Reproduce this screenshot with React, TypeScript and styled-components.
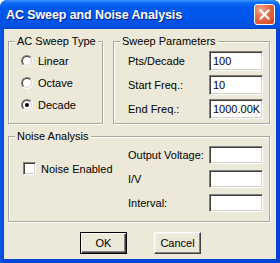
import React from 'react';
import styled, { createGlobalStyle } from 'styled-components';

const Global = createGlobalStyle`
  html, body { margin: 0; padding: 0; background: #ffffff; }
  body { font-family: "Liberation Sans", Arial, sans-serif; }
  #root { width: 280px; height: 263px; }
`;

const Window = styled.div`
  width: 280px;
  height: 263px;
  box-sizing: border-box;
  display: flex;
  flex-direction: column;
  background: linear-gradient(to right, #0A5BE5 0px, #0646D6 4px, #0646D6 276px, #0A3FC8 280px);
  border-radius: 7px 7px 0 0;
  overflow: hidden;
`;

const TitleBar = styled.div`
  height: 29px;
  flex: 0 0 29px;
  box-sizing: border-box;
  display: flex;
  align-items: center;
  justify-content: space-between;
  padding: 0 5px 0 6px;
  background: linear-gradient(
    to bottom,
    #3D95FF 0px,
    #0A6AF4 3px,
    #0058EE 8px,
    #0055E8 20px,
    #0050E0 26px,
    #0046D0 29px
  );
`;

const Title = styled.span`
  color: #ffffff;
  font-family: "Liberation Sans", Arial, sans-serif;
  font-weight: bold;
  font-size: 12.5px;
  letter-spacing: -0.1px;
  text-shadow: 1px 1px 0 #0A1E80;
  padding-top: 1px;
`;

const CloseButton = styled.div`
  width: 21px;
  height: 21px;
  box-sizing: border-box;
  border: 1px solid #ffffff;
  border-radius: 3px;
  background: radial-gradient(circle at 30% 25%, #F0A88A 0%, #E56A43 45%, #D2451C 100%);
  display: flex;
  align-items: center;
  justify-content: center;
`;

const Client = styled.div`
  flex: 1;
  margin: 0 4px 4px 4px;
  background: #ECE9D8;
  box-sizing: border-box;
  padding: 6px 0 0 4px;
  display: flex;
  flex-direction: column;
`;

const TopRow = styled.div`
  display: flex;
  gap: 10px;
`;

const Group = styled.fieldset<{ $w: number; $h: number; $mt?: number }>`
  margin: ${p => p.$mt ?? 0}px 0 0 0;
  padding: 0;
  min-width: 0;
  width: ${p => p.$w}px;
  height: ${p => p.$h}px;
  box-sizing: border-box;
  border: 1px solid #ACA899;
  box-shadow: inset 1px 1px 0 #ffffff, 1px 1px 0 #ffffff;
`;

const Caption = styled.legend`
  margin-left: 6px;
  padding: 0 2px;
  font-size: 11px;
  line-height: 13px;
  color: #000000;
  background: #ECE9D8;
`;

const RadioList = styled.div`
  display: flex;
  flex-direction: column;
  gap: 6px;
  padding: 5px 0 0 12px;
`;

const OptionRow = styled.label`
  display: flex;
  align-items: center;
  gap: 5px;
  height: 16px;
  font-size: 11px;
  color: #000000;
`;

const RadioOuter = styled.span`
  width: 12px;
  height: 12px;
  box-sizing: border-box;
  border-radius: 50%;
  border: 1px solid;
  border-color: #808080 #ffffff #ffffff #808080;
  display: flex;
`;

const RadioInner = styled.span<{ $on: boolean }>`
  flex: 1;
  border-radius: 50%;
  border: 1px solid;
  border-color: #404040 #D4D0C8 #D4D0C8 #404040;
  background: #ffffff;
  display: flex;
  align-items: center;
  justify-content: center;
  &::after {
    content: "";
    width: 4px;
    height: 4px;
    border-radius: 50%;
    background: ${p => (p.$on ? '#000000' : 'transparent')};
  }
`;

const FieldGrid = styled.div<{ $rowH: number }>`
  display: grid;
  grid-template-columns: 81px 54px;
  grid-auto-rows: ${p => p.$rowH}px;
  row-gap: ${p => 24 - p.$rowH}px;
  align-items: center;
  padding-top: 3px;
`;

const FieldLabel = styled.span`
  font-size: 11px;
  color: #000000;
  white-space: nowrap;
`;

const TextBox = styled.div`
  height: 100%;
  box-sizing: border-box;
  border: 1px solid;
  border-color: #808080 #ffffff #ffffff #808080;
  box-shadow: inset 1px 1px 0 #404040, inset -1px -1px 0 #D4D0C8;
  background: #ffffff;
  font-size: 11px;
  color: #000000;
  padding: 2px 0 0 3px;
  line-height: 14px;
  white-space: nowrap;
  overflow: hidden;
`;

const GroupBody = styled.div`
  display: flex;
  padding-left: 14px;
`;

const CheckCol = styled.div`
  width: 105px;
  padding-top: 19px;
`;

const CheckRow = styled.label`
  display: flex;
  align-items: center;
  gap: 5px;
  font-size: 11px;
  color: #000000;
  height: 13px;
`;

const CheckBox = styled.span`
  width: 13px;
  height: 13px;
  box-sizing: border-box;
  border: 1px solid;
  border-color: #808080 #ffffff #ffffff #808080;
  box-shadow: inset 1px 1px 0 #404040, inset -1px -1px 0 #D4D0C8;
  background: #ffffff;
`;

const ButtonRow = styled.div`
  display: flex;
  gap: 27px;
  padding-left: 72px;
  margin-top: 10px;
`;

const Button = styled.div<{ $default?: boolean }>`
  width: 47px;
  height: 22px;
  box-sizing: border-box;
  display: flex;
  align-items: center;
  justify-content: center;
  font-size: 11px;
  color: #000000;
  background: #ECE9D8;
  border: 1px solid;
  border-color: ${p => (p.$default ? '#000000' : '#ffffff #404040 #404040 #ffffff')};
  box-shadow: ${p =>
    p.$default
      ? 'inset 1px 1px 0 #ffffff, inset -1px -1px 0 #404040, inset -2px -2px 0 #808080'
      : 'inset -1px -1px 0 #808080, inset 1px 1px 0 #F4F2E8'};
`;

const Radio = ({ label, on }: { label: string; on?: boolean }) => (
  <OptionRow>
    <RadioOuter>
      <RadioInner $on={!!on} />
    </RadioOuter>
    {label}
  </OptionRow>
);

export default function App() {
  return (
    <>
      <Global />
      <Window>
        <TitleBar>
          <Title>AC Sweep and Noise Analysis</Title>
          <CloseButton>
            <svg width="11" height="11" viewBox="0 0 11 11">
              <path d="M1.5 1.5 L9.5 9.5 M9.5 1.5 L1.5 9.5" stroke="#ffffff" strokeWidth="2.2" strokeLinecap="square" />
            </svg>
          </CloseButton>
        </TitleBar>
        <Client>
          <TopRow>
            <Group $w={95} $h={89}>
              <Caption>AC Sweep Type</Caption>
              <RadioList>
                <Radio label="Linear" />
                <Radio label="Octave" />
                <Radio label="Decade" on />
              </RadioList>
            </Group>
            <Group $w={157} $h={89}>
              <Caption>Sweep Parameters</Caption>
              <GroupBody>
                <FieldGrid $rowH={20}>
                  <FieldLabel>Pts/Decade</FieldLabel>
                  <TextBox>100</TextBox>
                  <FieldLabel>Start Freq.:</FieldLabel>
                  <TextBox>10</TextBox>
                  <FieldLabel>End Freq.:</FieldLabel>
                  <TextBox>1000.00K</TextBox>
                </FieldGrid>
              </GroupBody>
            </Group>
          </TopRow>
          <Group $w={262} $h={92} $mt={6}>
            <Caption>Noise Analysis</Caption>
            <GroupBody>
              <CheckCol>
                <CheckRow>
                  <CheckBox />
                  Noise Enabled
                </CheckRow>
              </CheckCol>
              <FieldGrid $rowH={18}>
                <FieldLabel>Output Voltage:</FieldLabel>
                <TextBox />
                <FieldLabel>I/V</FieldLabel>
                <TextBox />
                <FieldLabel>Interval:</FieldLabel>
                <TextBox />
              </FieldGrid>
            </GroupBody>
          </Group>
          <ButtonRow>
            <Button $default>OK</Button>
            <Button>Cancel</Button>
          </ButtonRow>
        </Client>
      </Window>
    </>
  );
}
